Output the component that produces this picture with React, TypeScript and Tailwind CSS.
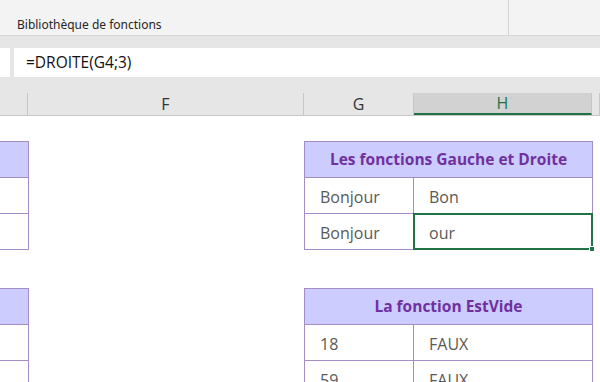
import React from 'react';

const cellFont = { fontFamily: '"Open Sans", "Noto Sans", sans-serif' };

function TableBlock({
  title,
  rows,
  selected,
}: {
  title: string;
  rows: [string, string][];
  selected?: number;
}) {
  return (
    <div className="flex">
      {/* partial table in column E */}
      <div className="w-[29px] shrink-0 border-r border-[#a48cc4]">
        <div className="h-[37px] bg-[#ccccff] border-y border-[#a48cc4]" />
        {rows.map((_, i) => (
          <div key={i} className="h-[36px] border-b border-[#a48cc4]" />
        ))}
      </div>
      <div className="w-[275px] shrink-0" />
      <div className="w-[289px] shrink-0 border-x border-[#a48cc4]">
        <div className="h-[37px] bg-[#ccccff] border-y border-[#a48cc4] flex items-center justify-center pt-[1px]">
          <span className="text-[15.5px] font-bold text-[#7030a0]">{title}</span>
        </div>
        {rows.map(([a, b], i) => (
          <div key={i} className="h-[36px] flex border-b border-[#a48cc4] text-[16px] text-[#595959]">
            <div className="w-[109px] border-r border-[#a48cc4] pl-[15px] pt-[2px] flex items-center">{a}</div>
            <div className="relative flex-1 pl-[15px] pt-[2px] flex items-center">
              {b}
              {selected === i && (
                <div className="absolute -left-px -top-px -right-px -bottom-px border-2 border-[#217346]">
                  <div className="absolute -right-[4px] -bottom-[4px] w-[6px] h-[6px] bg-[#217346] border border-white" />
                </div>
              )}
            </div>
          </div>
        ))}
      </div>
    </div>
  );
}

export default function App() {
  const headers = [
    { label: '', w: 'w-[28px]', sel: false },
    { label: 'F', w: 'w-[276px]', sel: false },
    { label: 'G', w: 'w-[110px]', sel: false },
    { label: 'H', w: 'w-[178px]', sel: true },
    { label: '', w: 'w-[8px]', sel: false },
  ];

  return (
    <div className="w-[600px] h-[382px] overflow-hidden bg-white" style={cellFont}>
      {/* ribbon bottom */}
      <div className="h-[36px] bg-[#f3f3f3] border-b border-[#d6d6d6] flex">
        <div className="w-[509px] border-r border-[#d4d4d4] pl-[17px] pt-[16px] text-[12px] text-[#262626]" style={{ fontFamily: '"Noto Sans", "Open Sans", sans-serif' }}>
          Bibliothèque de fonctions
        </div>
        <div className="flex-1" />
      </div>

      {/* formula bar */}
      <div className="bg-[#e6e6e6] pt-[12px] pb-[13px]">
        <div className="h-[29px] flex gap-[4px]">
          <div className="w-[10px] bg-white" />
          <div className="flex-1 bg-white flex items-center pl-[12px] pt-[1px] text-[15.5px] text-[#111]">=DROITE(G4;3)</div>
        </div>
      </div>

      {/* column headers */}
      <div className="h-[26px] bg-[#e6e6e6] flex border-b border-[#c8c8c8] text-[16px] text-[#333]">
        {headers.map((h, i) => (
          <div
            key={i}
            className={
              h.sel
                ? `${h.w} shrink-0 mt-[3px] bg-[#d2d2d2] border-r border-[#c6c6c6] border-b-2 border-b-[#217346] flex items-center justify-center text-[#217346]`
                : `${h.w} shrink-0 mt-[3px] border-r border-[#c6c6c6] flex items-center justify-center`
            }
          >
            {h.label}
          </div>
        ))}
      </div>

      {/* sheet */}
      <div className="pt-[25px] flex flex-col gap-[38px]">
        <TableBlock
          title="Les fonctions Gauche et Droite"
          rows={[
            ['Bonjour', 'Bon'],
            ['Bonjour', 'our'],
          ]}
          selected={1}
        />
        <TableBlock
          title="La fonction EstVide"
          rows={[
            ['18', 'FAUX'],
            ['59', 'FAUX'],
          ]}
        />
      </div>
    </div>
  );
}
